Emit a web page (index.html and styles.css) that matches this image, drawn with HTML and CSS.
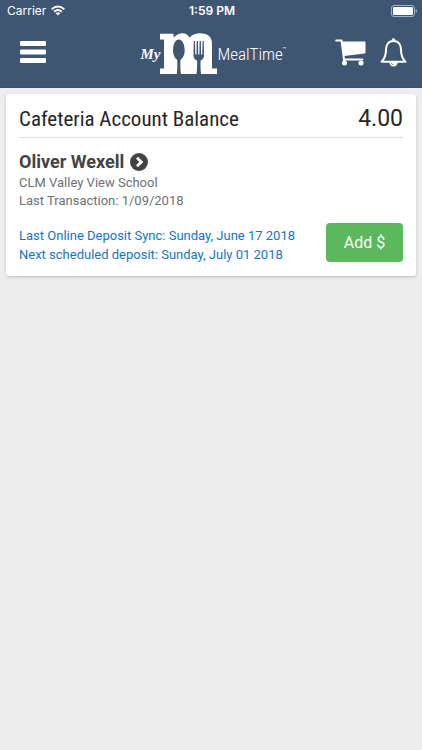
FILE: index.html
```html
<!DOCTYPE html>
<html lang="en">
<head>
<meta charset="utf-8">
<meta name="viewport" content="width=device-width, initial-scale=1">
<title>My MealTime</title>
<link rel="stylesheet" href="styles.css">
</head>
<body>
<header class="header">
  <div class="status">
    <div class="carrier">
      <span>Carrier</span>
      <svg width="14" height="11" viewBox="0 0 16 12" fill="none" stroke="#fff" stroke-width="2.2" aria-hidden="true">
        <path d="M.8 4.600Q8-1.500 15.200 4.600M3.600 7.300Q8 3.700 12.400 7.300"/>
        <path d="M5.300 9Q8 7 10.700 9L8 11.700Z" fill="#fff" stroke="none"/>
      </svg>
    </div>
    <time class="clock">1:59 PM</time>
    <svg class="battery" width="26" height="12" viewBox="0 0 26 12" aria-hidden="true">
      <rect x=".5" y=".5" width="23" height="11" rx="2.500" fill="none" stroke="#a3b0c3"/>
      <rect x="2" y="2" width="20" height="8" rx="1" fill="#fff"/>
      <path d="M24.700 4Q26 4.600 26 6T24.700 8Z" fill="#a3b0c3"/>
    </svg>
  </div>
  <nav class="bar">
    <button class="icon-button" type="button" aria-label="Menu">
      <svg width="26" height="22" viewBox="0 0 26 22" fill="#fff">
        <rect width="26" height="5" rx="1"/><rect y="8.500" width="26" height="5" rx="1"/><rect y="17" width="26" height="5" rx="1"/>
      </svg>
    </button>
    <a class="logo" href="#" aria-label="My MealTime">
      <span class="logo-my">My</span>
      <svg width="57" height="42" viewBox="0 0 57 42" aria-hidden="true">
        <path fill="#fff" d="M0 .8H13.500V4.500C17 1.300 19.500 .2 22.500 .2C26 .2 28 1.800 29.500 4.500C32.500 1.500 36 .2 40 .2C48 .2 52 4 52 11V35.500H57V41H0V35.500H4V6.500H0Z"/>
        <path fill="#3f5673" d="M18.800 6.500C22.600 6.500 24.700 12 24.700 17.500C24.700 22 22.500 25.500 20.400 27C20.300 32 20.200 36 21 42H16.700C17.500 36 17.400 32 17.300 27C15 25.500 13 22 13 17.500C13 12 15 6.500 18.800 6.500Z"/>
        <path fill="#3f5673" d="M33.800 8H35L35.300 21.500H36.500L36.700 8H38L38.200 21.500H39.400L39.600 8H40.900L41.100 21.500H42.300L42.600 8H43.800L44 22.500Q44 26 40.600 27.500C40.400 33 40.500 37 41.200 42H36.400C37 37 37.300 33 37.100 27.500Q33.500 26 33.500 22.500Z"/>
      </svg>
      <span class="logo-name">MealTime</span><span class="trademark">™</span>
    </a>
    <div class="actions">
      <button class="icon-button" type="button" aria-label="Cart">
        <svg width="31" height="27" viewBox="0 0 31 27">
          <path fill="none" stroke="#fff" stroke-width="2" stroke-linecap="round" stroke-linejoin="round" d="M1.200 1.500H6.500L9 20.500H27.500"/>
          <path fill="#fff" d="M6.500 2.600H29.500Q30.500 2.600 30.500 3.600V13.500Q30.500 14.300 29.500 14.500L9 17Z"/>
          <circle cx="9.500" cy="24" r="2.500" fill="#fff"/><circle cx="26" cy="24" r="2.500" fill="#fff"/>
          <path stroke="#fff" stroke-width="2" d="M9 20V23"/>
        </svg>
      </button>
      <button class="icon-button" type="button" aria-label="Notifications">
        <svg width="27" height="29" viewBox="0 0 27 29">
          <path fill="none" stroke="#fff" stroke-width="2" stroke-linejoin="round" d="M13.500 3C8 3 6 7.500 6 11.500C6 17 5 20.500 1.500 23.700H25.500C22 20.500 21 17 21 11.500C21 7.500 19 3 13.500 3Z"/>
          <path fill="#fff" d="M9.300 24H17.700C17.700 26.500 16 28.500 13.500 28.500S9.300 26.500 9.300 24Z"/>
          <path fill="none" stroke="#3f5673" stroke-width=".7" d="M11.300 25Q11.500 26.500 13.300 26.700"/>
          <circle cx="13.500" cy="2" r="1.800" fill="#fff"/>
        </svg>
      </button>
    </div>
  </nav>
</header>
<main class="content">
  <section class="card">
    <div class="balance">
      <h1 class="title">Cafeteria Account Balance</h1>
      <span class="amount">4.00</span>
    </div>
    <h2 class="person"><a class="person-link" href="#">Oliver Wexell
      <svg width="18" height="18" viewBox="0 0 18 18" aria-hidden="true"><circle cx="9" cy="9" r="9" fill="#434343"/><path d="M7 4.700L11.300 9L7 13.300" fill="none" stroke="#fff" stroke-width="2.800"/></svg></a></h2>
    <p class="details">CLM Valley View School<br>Last Transaction: 1/09/2018</p>
    <div class="deposit">
      <p class="schedule">Last Online Deposit Sync: Sunday, June 17 2018<br>Next scheduled deposit: Sunday, July 01 2018</p>
      <button class="add" type="button">Add $</button>
    </div>
  </section>
</main>
</body>
</html>
```
FILE: styles.css
```css
* {
  box-sizing: border-box;
}

body {
  margin: 0;
  min-height: 100vh;
  background: #ededed;
  color: #262626;
  font-family: Roboto, sans-serif;
}

h1, h2, p {
  margin: 0;
}

svg {
  display: block;
  flex: none;
}

button {
  border: 0;
  font-family: inherit;
  cursor: pointer;
}

.header {
  padding-bottom: 13px;
  border-bottom: 1px solid #385070;
  background: #3f5673;
  color: #fff;
}

.status {
  display: grid;
  grid-template-columns: 1fr auto 1fr;
  align-items: center;
  height: 21px;
  padding: 0 5px 0 7px;
  font-family: Inter, sans-serif;
  font-size: 12px;
}

.carrier {
  display: flex;
  align-items: center;
  gap: 5px;
}

.clock {
  font-weight: 600;
}

.battery {
  justify-self: end;
}

.bar {
  display: grid;
  grid-template-columns: 1fr auto 1fr;
  align-items: center;
  height: 53px;
  padding: 8px 15px 0 20px;
}

.icon-button {
  justify-self: start;
  padding: 0;
  background: none;
}

.logo {
  display: flex;
  align-items: center;
  padding-top: 4px;
  color: #fff;
  text-decoration: none;
}

.logo-my {
  font-family: "Liberation Serif", serif;
  font-size: 15px;
  font-style: italic;
  font-weight: 700;
}

.logo-name {
  font-family: "Roboto Condensed", Roboto, sans-serif;
  font-size: 17px;
  font-weight: 300;
}

.trademark {
  align-self: flex-start;
  padding-top: 12px;
  font-size: 6px;
  line-height: 8px;
}

.actions {
  display: flex;
  align-items: center;
  justify-self: end;
  gap: 14px;
}

.content {
  padding: 6px;
}

.card {
  padding: 6px 13px 12px;
  border-radius: 3px;
  background: #fff;
  box-shadow: 0 1px 3px #00000033;
}

.balance {
  display: flex;
  align-items: center;
  justify-content: space-between;
  height: 38px;
  border-bottom: 1px solid #dedede;
}

.title {
  font-family: "Roboto Condensed", Roboto, sans-serif;
  font-size: 21px;
  font-weight: 400;
}

.amount {
  font-size: 23px;
}

.person {
  margin-top: 12px;
  font-size: 18px;
  line-height: 24px;
}

.person-link {
  display: flex;
  align-items: center;
  gap: 6px;
  color: #434343;
  text-decoration: none;
}

.details {
  color: #6b7075;
  font-size: 13px;
  line-height: 18px;
}

.deposit {
  display: flex;
  align-items: flex-start;
  justify-content: space-between;
  margin-top: 13px;
}

.schedule {
  padding-top: 3px;
  color: #1474c4;
  font-size: 13px;
  line-height: 19px;
}

.add {
  min-width: 77px;
  height: 39px;
  border-radius: 4px;
  background: #5cb85c;
  color: #fff;
  font-size: 16px;
}
```
